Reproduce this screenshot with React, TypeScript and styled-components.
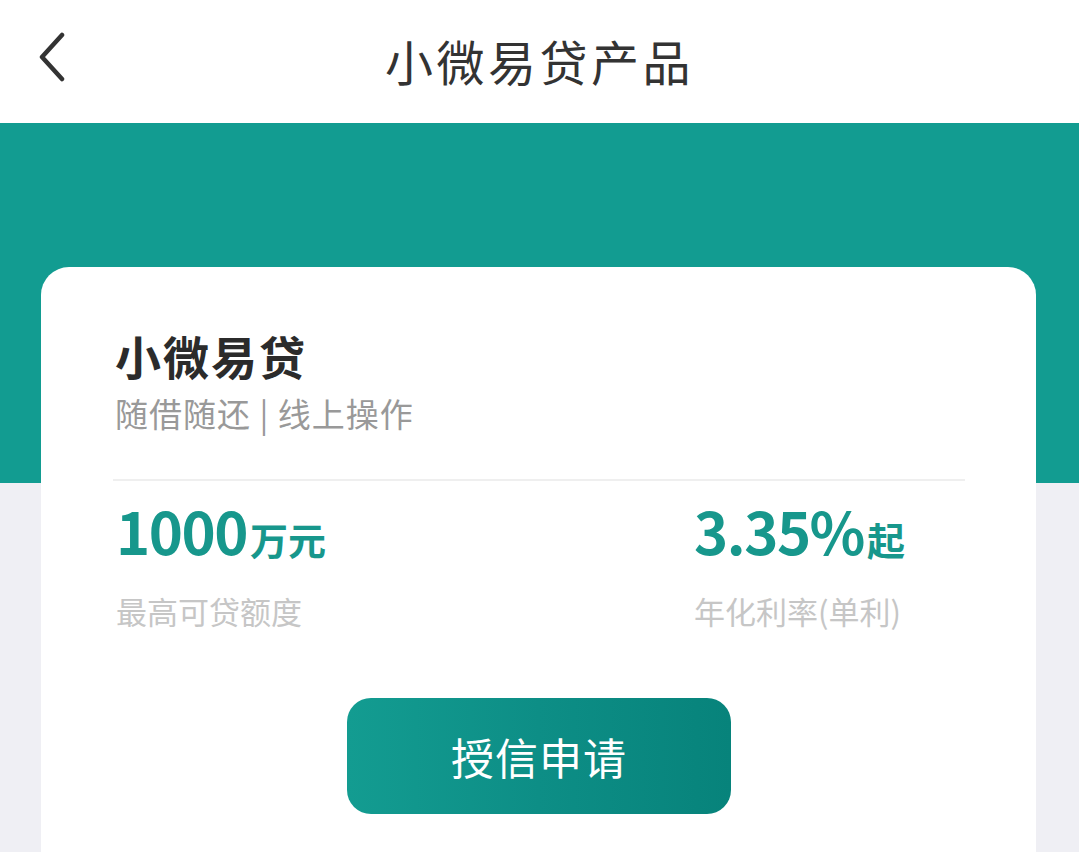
import React from 'react';
import styled, { createGlobalStyle } from 'styled-components';

const GlobalStyle = createGlobalStyle`
  html, body {
    margin: 0;
    padding: 0;
    background: #efeff4;
    font-family: "Noto Sans CJK SC", "Noto Sans", sans-serif;
  }
`;

const Page = styled.div`
  width: 1079px;
  height: 852px;
  overflow: hidden;
  background: #efeff4;
  position: relative;
`;

const Header = styled.header`
  height: 123px;
  background: #fff;
  display: flex;
  align-items: center;
  justify-content: center;
  position: relative;
`;

const BackButton = styled.button`
  position: absolute;
  left: 30px;
  top: 28px;
  width: 44px;
  height: 58px;
  border: none;
  background: none;
  padding: 0;
  display: flex;
  align-items: center;
  justify-content: center;
`;

const Title = styled.h1`
  margin: 0 0 4px 0;
  font-size: 48px;
  font-weight: 400;
  color: #333;
  letter-spacing: 3.5px;
`;

const Band = styled.div`
  height: 360px;
  background: #129c91;
`;

const Card = styled.div`
  position: absolute;
  left: 41px;
  top: 267px;
  width: 995px;
  height: 640px;
  background: #fff;
  border-radius: 28px;
  padding: 58px 71px 0 72px;
  box-sizing: border-box;
`;

const ProductName = styled.div`
  font-size: 46px;
  font-weight: 700;
  color: #2b2b2b;
  line-height: 60px;
  padding-left: 2px;
  letter-spacing: 2px;
`;

const Tagline = styled.div`
  font-size: 33px;
  color: #999;
  line-height: 40px;
  margin-top: 8px;
  padding-left: 2px;
  letter-spacing: 1px;
`;

const Divider = styled.div`
  height: 2px;
  background: #efefef;
  margin-top: 46px;
`;

const Stats = styled.div`
  display: flex;
  justify-content: space-between;
  padding: 14px 60px 0 3px;
`;

const Stat = styled.div`
  display: flex;
  flex-direction: column;
`;

const Value = styled.div`
  color: #17978c;
  font-weight: 700;
  font-size: 58px;
  line-height: 70px;
  letter-spacing: -1.5px;
  white-space: nowrap;
`;

const Unit = styled.span`
  font-size: 38px;
  letter-spacing: 0;
  margin-left: 3px;
`;

const Label = styled.div`
  color: #c6c6c6;
  font-size: 31px;
  line-height: 40px;
  margin-top: 17px;
`;

const ApplyButton = styled.button`
  display: block;
  margin: 67px auto 0;
  width: 384px;
  height: 116px;
  border: none;
  border-radius: 24px;
  background: linear-gradient(90deg, #139c91 0%, #0d8e86 50%, #07837b 100%);
  color: #fff;
  font-family: "Noto Sans CJK SC", sans-serif;
  font-size: 43px;
  letter-spacing: 1px;
`;

export default function App() {
  return (
    <Page>
      <GlobalStyle />
      <Header>
        <BackButton aria-label="back">
          <svg width="30" height="50" viewBox="0 0 30 50">
            <path d="M25 3 L5 25 L25 47" fill="none" stroke="#333" strokeWidth="4.5" strokeLinecap="round" strokeLinejoin="round" />
          </svg>
        </BackButton>
        <Title>小微易贷产品</Title>
      </Header>
      <Band />
      <Card>
        <ProductName>小微易贷</ProductName>
        <Tagline>随借随还 | 线上操作</Tagline>
        <Divider />
        <Stats>
          <Stat>
            <Value>1000<Unit>万元</Unit></Value>
            <Label>最高可贷额度</Label>
          </Stat>
          <Stat>
            <Value>3.35%<Unit>起</Unit></Value>
            <Label>年化利率(单利)</Label>
          </Stat>
        </Stats>
        <ApplyButton>授信申请</ApplyButton>
      </Card>
    </Page>
  );
}
